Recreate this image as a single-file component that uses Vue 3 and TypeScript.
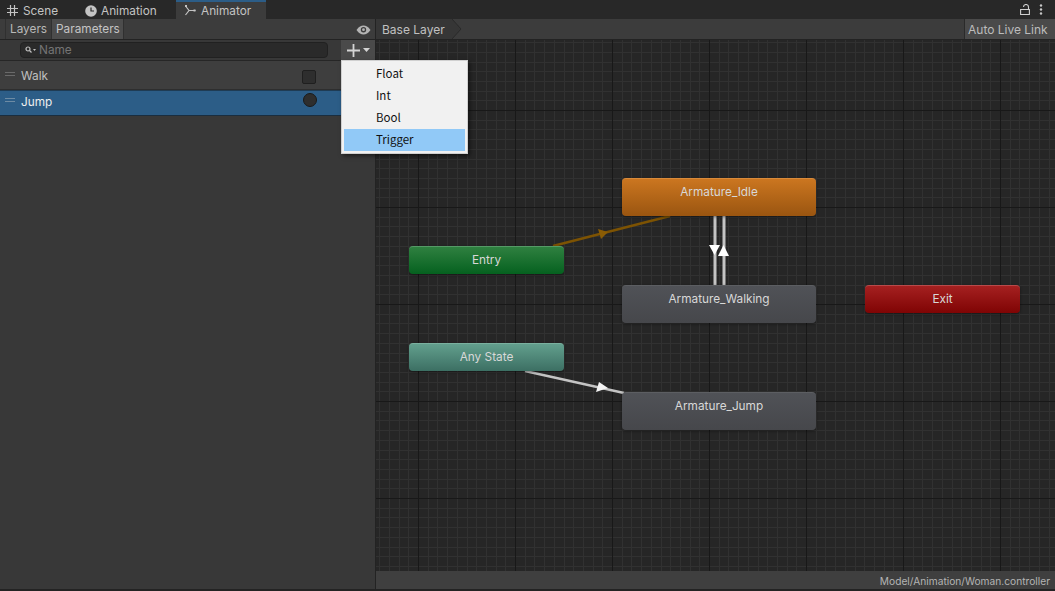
<template>
  <div class="window">
    <div class="tabs">
      <div v-for="tab in tabs" :key="tab.name" class="tab" :class="{ active: tab.active }">
        <svg v-if="tab.name === 'Scene'" class="tab-icon" viewBox="0 0 11 11">
          <path d="M3.500 0v11M7.500 0v11M0 3.500h11M0 7.500h11" stroke="#c4c4c4" stroke-width="1.200" fill="none" />
        </svg>
        <svg v-else-if="tab.name === 'Animation'" class="tab-icon round" viewBox="0 0 12 12">
          <circle cx="6" cy="6" r="5.800" fill="#c4c4c4" />
          <path d="M6 2.500V6h3" stroke="#282828" stroke-width="1.200" fill="none" />
        </svg>
        <svg v-else class="tab-icon" viewBox="0 0 11 11">
          <path d="M.5 1 4 5.500.5 10M4 5.500h6.500" stroke="#c4c4c4" stroke-width="1.200" fill="none" />
          <rect x="0" y="0" width="2" height="2" fill="#c4c4c4" />
          <rect x="8.500" y="4.500" width="2" height="2" fill="#c4c4c4" />
        </svg>
        <span>{{ tab.name }}</span>
      </div>
      <div class="tab-tools">
        <svg width="10" height="11" viewBox="0 0 10 11">
          <path d="M8.500 5V3a2.500 2.500 0 0 0-5 0M.6 5.500h8.800v5H.6z" stroke="#d0d0d0" stroke-width="1.100" fill="none" />
        </svg>
        <svg width="4" height="11" viewBox="0 0 4 11">
          <circle cx="2" cy="1.500" r="1.200" fill="#c8c8c8" />
          <circle cx="2" cy="5.500" r="1.200" fill="#c8c8c8" />
          <circle cx="2" cy="9.500" r="1.200" fill="#c8c8c8" />
        </svg>
      </div>
    </div>

    <div class="body">
      <aside class="side">
        <div class="side-tabs">
          <div class="side-tab">Layers</div>
          <div class="side-tab on">Parameters</div>
          <svg class="eye" width="15" height="10" viewBox="0 0 15 10">
            <path d="M.5 5C3 1.500 5 .5 7.500 .5S12 1.500 14.500 5C12 8.500 10 9.500 7.500 9.500S3 8.500 .5 5z" fill="#b4b4b4" />
            <circle cx="7.500" cy="4.700" r="2.700" fill="#3c3c3c" />
            <circle cx="7.500" cy="4.700" r="1.400" fill="#b4b4b4" />
          </svg>
        </div>

        <div class="search-row">
          <div class="search">
            <svg width="11" height="8" viewBox="0 0 11 8">
              <circle cx="3" cy="3" r="2" stroke="#c0c0c0" stroke-width="1.200" fill="none" />
              <path d="M4.500 4.500 6.500 6.500" stroke="#c0c0c0" stroke-width="1.200" />
              <path d="M8 3h3L9.500 5z" fill="#c0c0c0" />
            </svg>
            <span>Name</span>
          </div>
          <div class="add">
            <svg width="13" height="13" viewBox="0 0 13 13">
              <path d="M6.500 0v13M0 6.500h13" stroke="#d4d4d4" stroke-width="1.800" />
            </svg>
            <svg width="7" height="4" viewBox="0 0 7 4"><path d="M0 0h7L3.500 4z" fill="#d4d4d4" /></svg>
          </div>
        </div>

        <div class="param walk">
          <span class="grip"></span>
          <span class="param-name">Walk</span>
          <span class="check"></span>
        </div>
        <div class="param jump">
          <span class="grip"></span>
          <span class="param-name">Jump</span>
          <span class="radio"></span>
        </div>

        <ul class="menu">
          <li v-for="item in menuItems" :key="item" :class="{ hot: item === 'Trigger' }">{{ item }}</li>
        </ul>
      </aside>

      <main class="graph">
        <div class="crumbs">
          <div class="crumb">Base Layer</div>
          <svg class="crumb-tip" width="10" height="20" viewBox="0 0 10 20">
            <path d="M0 0 9 10 0 20z" fill="#363636" />
            <path d="M0 0 9 10 0 20" stroke="#2a2a2a" fill="none" />
          </svg>
          <div class="crumb-fill"></div>
          <div class="live">Auto Live Link</div>
        </div>

        <div class="canvas">
          <svg class="edges" width="679" height="531" viewBox="0 0 679 531">
            <path d="M177 206 294 176" stroke="#7d5303" stroke-width="2.500" />
            <path d="M222 189 232 192 225 199z" fill="#8a5c05" />
            <path d="M149 331 248 353" stroke="#c4c4c4" stroke-width="2.500" />
            <path d="M223 342 232 348 220 352z" fill="#f4f4f4" />
            <path d="M339 176v69M348 176v69" stroke="#c4c4c4" stroke-width="3" />
            <path d="M333 205h11l-5.500 10z" fill="#fff" />
            <path d="M342 216h11l-5.500-11z" fill="#fff" />
          </svg>

          <div
            v-for="node in nodes"
            :key="node.name"
            class="node"
            :class="node.kind"
            :style="{ left: node.x + 'px', top: node.y + 'px', width: node.w + 'px', height: node.h + 'px' }"
          >
            {{ node.name }}
          </div>
        </div>

        <div class="status">Model/Animation/Woman.controller</div>
      </main>
    </div>
  </div>
</template>

<script setup lang="ts">
interface StateNode {
  name: string
  kind: string
  x: number
  y: number
  w: number
  h: number
}

const tabs = [
  { name: 'Scene', active: false },
  { name: 'Animation', active: false },
  { name: 'Animator', active: true },
]

const menuItems = ['Float', 'Int', 'Bool', 'Trigger']

// coordinates are relative to the canvas
const nodes: StateNode[] = [
  { name: 'Armature_Idle', kind: 'orange', x: 246, y: 138, w: 194, h: 38 },
  { name: 'Entry', kind: 'green', x: 33, y: 206, w: 155, h: 28 },
  { name: 'Armature_Walking', kind: 'grey', x: 246, y: 245, w: 194, h: 38 },
  { name: 'Exit', kind: 'red', x: 489, y: 245, w: 155, h: 28 },
  { name: 'Any State', kind: 'teal', x: 33, y: 303, w: 155, h: 28 },
  { name: 'Armature_Jump', kind: 'grey', x: 246, y: 352, w: 194, h: 38 },
]
</script>

<style>
html,
body {
  margin: 0;
  background: #232323;
}
</style>

<style scoped>
.window {
  width: 1055px;
  height: 591px;
  display: flex;
  flex-direction: column;
  overflow: hidden;
  background: #232323;
  color: #c4c4c4;
  font-family: Inter, "Liberation Sans", sans-serif;
  font-size: 11.8px;
}
.tabs {
  height: 19px;
  flex: none;
  display: flex;
  background: #282828;
}
.tab {
  display: flex;
  align-items: center;
  gap: 5px;
  height: 19px;
  box-sizing: border-box;
  padding-top: 2px;
}
.tab:nth-child(1) {
  width: 84px;
  padding-left: 7px;
}
.tab:nth-child(2) {
  width: 92px;
  padding-left: 1px;
  gap: 4px;
}
.tab.active {
  width: 90px;
  padding-left: 9px;
  background: #3c3c3c;
  border-top: 2px solid #2c5d87;
  padding-top: 0;
}
.tab-icon {
  width: 11px;
  height: 11px;
  flex: none;
}
.tab-icon.round {
  width: 12px;
  height: 12px;
}
.tab-tools {
  margin-left: auto;
  display: flex;
  align-items: center;
  gap: 9px;
  padding-right: 12px;
}
.body {
  flex: 1;
  display: flex;
  min-height: 0;
  border-bottom: 2px solid #232323;
}
.side {
  position: relative;
  width: 375px;
  flex: none;
  background: #383838;
  border-right: 1px solid #232323;
}
.side-tabs {
  height: 21px;
  box-sizing: border-box;
  display: flex;
  padding-left: 5px;
  background: #3c3c3c;
  border-bottom: 1px solid #232323;
}
.side-tab {
  padding: 0 4px;
  line-height: 21px;
  border-left: 1px solid #303030;
  color: #b8b8b8;
}
.side-tab.on {
  width: 73px;
  box-sizing: border-box;
  background: #4c4c4c;
  border-right: 1px solid #303030;
  color: #c4c4c4;
}
.eye {
  margin: 6px 4px 0 auto;
}
.search-row {
  height: 21px;
  box-sizing: border-box;
  display: flex;
  align-items: flex-start;
  padding-left: 20px;
  background: #383838;
  border-bottom: 1px solid #262626;
}
.search {
  width: 308px;
  height: 16px;
  margin-top: 2px;
  flex: none;
  box-sizing: border-box;
  display: flex;
  align-items: center;
  gap: 3px;
  padding-left: 4px;
  border: 1px solid #212121;
  border-radius: 4px;
  background: #2a2a2a;
  color: #757575;
}
.add {
  width: 34px;
  height: 20px;
  margin-left: 13px;
  flex: none;
  box-sizing: border-box;
  padding-left: 6px;
  display: flex;
  align-items: center;
  gap: 3px;
  background: #4a4a4a;
}
.param {
  position: relative;
  box-sizing: border-box;
  padding-left: 21px;
}
.walk {
  height: 29px;
  line-height: 30px;
  background: #3e3e3e;
  border-bottom: 1px solid #2e2e2e;
  color: #c0c0c0;
}
.jump {
  height: 26px;
  line-height: 23px;
  background: #2c5d87;
  border-top: 1px solid #1f3c55;
  border-bottom: 1px solid #1a2e40;
  color: #eeeeee;
}
.grip {
  position: absolute;
  left: 5px;
  top: 11px;
  width: 10px;
  height: 4px;
  border-top: 1px solid #6a6a6a;
  border-bottom: 1px solid #6a6a6a;
  box-sizing: border-box;
}
.jump .grip {
  top: 7px;
  border-color: #6d8ba4;
}
.check {
  position: absolute;
  left: 302px;
  top: 9px;
  width: 14px;
  height: 14px;
  box-sizing: border-box;
  border: 1px solid #1f1f1f;
  border-radius: 2px;
  background: #2e2e2e;
}
.radio {
  position: absolute;
  left: 303px;
  top: 2px;
  width: 14px;
  height: 14px;
  box-sizing: border-box;
  border: 1px solid #1a1a1a;
  border-radius: 50%;
  background: #2e2e2e;
}
.menu {
  position: absolute;
  z-index: 2;
  left: 341px;
  top: 41px;
  width: 127px;
  height: 94px;
  box-sizing: border-box;
  margin: 0;
  padding: 2px;
  list-style: none;
  background: #f1f1f1;
  border: 1px solid #d0d0d0;
  box-shadow: 2px 2px 4px rgba(0, 0, 0, 0.5);
  font-family: "Noto Sans CJK KR", "Noto Sans", sans-serif;
  font-size: 11.500px;
  color: #101010;
}
.menu li {
  height: 22px;
  line-height: 20px;
  padding-left: 32px;
}
.menu li.hot {
  background: #91c9f7;
  padding-left: 32px;
}
.graph {
  flex: 1;
  min-width: 0;
  display: flex;
  flex-direction: column;
}
.crumbs {
  height: 21px;
  box-sizing: border-box;
  flex: none;
  display: flex;
  background: #3c3c3c;
  border-bottom: 1px solid #232323;
}
.crumb {
  width: 76px;
  padding-left: 6px;
  box-sizing: border-box;
  line-height: 21px;
  background: #363636;
  color: #c0c0c0;
  font-size: 12px;
}
.crumb-tip {
  flex: none;
}
.crumb-fill {
  flex: 1;
}
.live {
  width: 91px;
  box-sizing: border-box;
  padding-left: 3px;
  line-height: 21px;
  background: #4a4a4a;
  border-left: 1px solid #2a2a2a;
  color: #bcbcbc;
  font-size: 12px;
}
.canvas {
  position: relative;
  flex: 1;
  min-height: 0;
  overflow: hidden;
  background-color: #262626;
  background-image:
    repeating-linear-gradient(to right, #181818 0 1px, transparent 1px 97px),
    repeating-linear-gradient(to bottom, #181818 0 1px, transparent 1px 97px),
    repeating-linear-gradient(to right, #313131 0 1px, transparent 1px 9.7px),
    repeating-linear-gradient(to bottom, #313131 0 1px, transparent 1px 9.7px);
  background-size: 970px 970px;
  background-position: 42px 0, 0 70px, 42px 0, 0 70px;
}
.edges {
  position: absolute;
  left: 0;
  top: 0;
}
.node {
  position: absolute;
  box-sizing: border-box;
  padding-top: 5px;
  border-radius: 4px;
  text-align: center;
  line-height: 16px;
  color: #d8d8d8;
  box-shadow: 0 1px 3px rgba(0, 0, 0, 0.45);
}
.orange {
  background: linear-gradient(#cb7620, #9a5510);
  border-top: 1px solid #d98a3a;
}
.green {
  background: linear-gradient(#2f8040, #05611f);
  border-top: 1px solid #559a66;
}
.grey {
  background: linear-gradient(#505257, #46474b);
  border-top: 1px solid #5c5e62;
}
.red {
  background: linear-gradient(#a52020, #7f0404);
  border-top: 1px solid #b84a4a;
}
.teal {
  background: linear-gradient(#629f8d, #3c6f63);
  border-top: 1px solid #7ab09f;
}
.status {
  height: 18px;
  flex: none;
  box-sizing: border-box;
  padding-right: 5px;
  text-align: right;
  line-height: 20px;
  font-size: 10.200px;
  background: #3f3f3f;
  color: #b4b4b4;
}
</style>
